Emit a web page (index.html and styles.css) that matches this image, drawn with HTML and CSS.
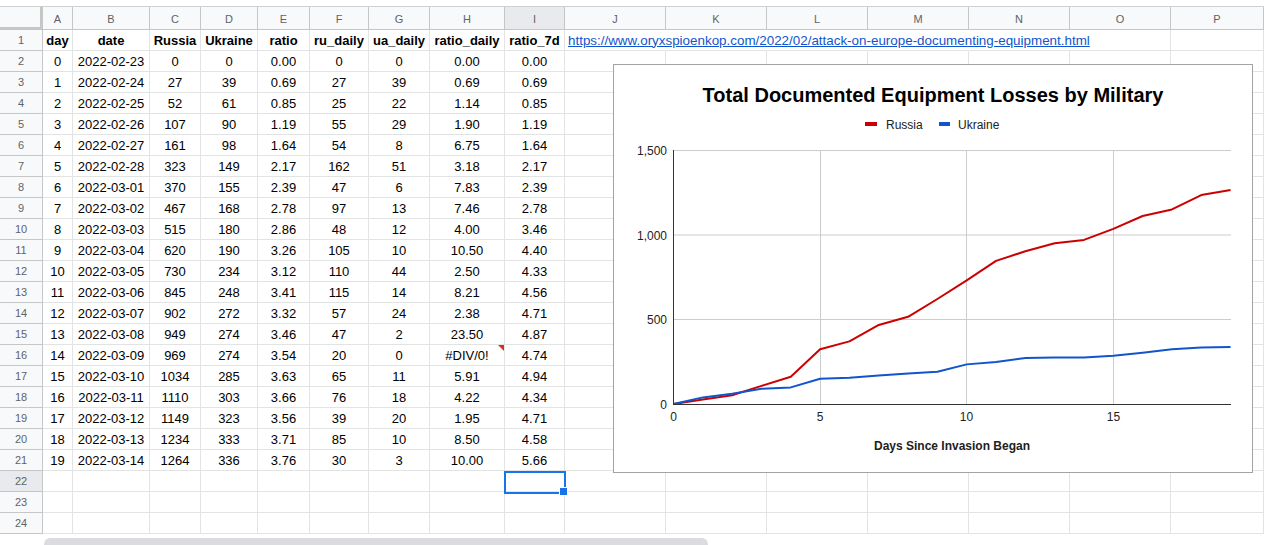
FILE: index.html
```html
<!DOCTYPE html>
<html lang="en">
<head>
    <meta charset="UTF-8">
    <meta name="viewport" content="width=device-width, initial-scale=1.0">
    <title>Equipment Losses</title>
    <link rel="stylesheet" href="styles.css">
</head>
<body>
<div class="sheet">
    <div class="topbar"></div>
    <div class="grid" id="grid"></div>

    <div class="sel"></div>

    <div class="chart">
        <svg class="plot" width="638" height="407">
            <g class="gridl">
                <line x1="59.5" y1="85.5" x2="617" y2="85.5"/>
                <line x1="59.5" y1="170" x2="617" y2="170"/>
                <line x1="59.5" y1="254.5" x2="617" y2="254.5"/>
                <line x1="206.5" y1="85" x2="206.5" y2="339"/>
                <line x1="352.5" y1="85" x2="352.5" y2="339"/>
                <line x1="499.5" y1="85" x2="499.5" y2="339"/>
            </g>
            <polyline id="ru" class="series" stroke="#cc0000"/>
            <polyline id="ua" class="series" stroke="#1155cc"/>
            <g class="axis">
                <line x1="59.5" y1="85" x2="59.5" y2="339.5"/>
                <line x1="59" y1="339.5" x2="617" y2="339.5"/>
            </g>

            <text class="title" x="319" y="36.5">Total Documented Equipment Losses by Military</text>

            <rect x="251" y="57" width="12" height="4" fill="#cc0000"/>
            <text class="lbl" x="272" y="63.5">Russia</text>
            <rect x="325" y="57" width="11" height="4" fill="#1155cc"/>
            <text class="lbl" x="344" y="63.5">Ukraine</text>

            <g class="ylbl">
                <text x="53" y="89.5">1,500</text>
                <text x="53" y="174.5">1,000</text>
                <text x="53" y="259">500</text>
                <text x="53" y="343.5">0</text>
            </g>
            <g class="xlbl">
                <text x="59.5" y="356">0</text>
                <text x="206" y="356">5</text>
                <text x="352.5" y="356">10</text>
                <text x="499.5" y="356">15</text>
            </g>
            <text class="xtitle" x="338" y="384.5">Days Since Invasion Began</text>
        </svg>
    </div>

    <div class="hscroll"><div class="thumb"></div></div>
</div>

<script>
    let letters = 'ABCDEFGHIJKLMNOP'.split('');
    let heads = ['day', 'date', 'Russia', 'Ukraine', 'ratio', 'ru_daily', 'ua_daily', 'ratio_daily', 'ratio_7d'];
    let rows = [
        [0, '2022-02-23', 0, 0, '0.00', 0, 0, '0.00', '0.00'],
        [1, '2022-02-24', 27, 39, '0.69', 27, 39, '0.69', '0.69'],
        [2, '2022-02-25', 52, 61, '0.85', 25, 22, '1.14', '0.85'],
        [3, '2022-02-26', 107, 90, '1.19', 55, 29, '1.90', '1.19'],
        [4, '2022-02-27', 161, 98, '1.64', 54, 8, '6.75', '1.64'],
        [5, '2022-02-28', 323, 149, '2.17', 162, 51, '3.18', '2.17'],
        [6, '2022-03-01', 370, 155, '2.39', 47, 6, '7.83', '2.39'],
        [7, '2022-03-02', 467, 168, '2.78', 97, 13, '7.46', '2.78'],
        [8, '2022-03-03', 515, 180, '2.86', 48, 12, '4.00', '3.46'],
        [9, '2022-03-04', 620, 190, '3.26', 105, 10, '10.50', '4.40'],
        [10, '2022-03-05', 730, 234, '3.12', 110, 44, '2.50', '4.33'],
        [11, '2022-03-06', 845, 248, '3.41', 115, 14, '8.21', '4.56'],
        [12, '2022-03-07', 902, 272, '3.32', 57, 24, '2.38', '4.71'],
        [13, '2022-03-08', 949, 274, '3.46', 47, 2, '23.50', '4.87'],
        [14, '2022-03-09', 969, 274, '3.54', 20, 0, '#DIV/0!', '4.74'],
        [15, '2022-03-10', 1034, 285, '3.63', 65, 11, '5.91', '4.94'],
        [16, '2022-03-11', 1110, 303, '3.66', 76, 18, '4.22', '4.34'],
        [17, '2022-03-12', 1149, 323, '3.56', 39, 20, '1.95', '4.71'],
        [18, '2022-03-13', 1234, 333, '3.71', 85, 10, '8.50', '4.58'],
        [19, '2022-03-14', 1264, 336, '3.76', 30, 3, '10.00', '5.66']
    ];
    let url = 'https://www.oryxspioenkop.com/2022/02/attack-on-europe-documenting-equipment.html';

    let grid = document.querySelector('#grid');

    function cell(cls, text){
        let d = document.createElement('div');
        d.className = cls;
        if(text !== undefined) d.textContent = text;
        grid.append(d);
        return d;
    }

    // column letters
    cell('corner');
    letters.forEach((l)=>{
        cell(l === 'I' ? 'ch active' : 'ch', l);
    });

    for(let r = 1; r <= 24; r++){
        cell(r === 22 ? 'rh active' : 'rh', r);
        for(let c = 0; c < letters.length; c++){
            let cls = 'cell';
            let txt = '';
            if(r === 1){
                if(c < heads.length){ cls += ' bold'; txt = heads[c]; }
                if(c === 9){ cls += ' link'; txt = url; }
                if(c >= 9 && c <= 13) cls += ' nogap';
            } else if(r <= 21 && c < heads.length){
                txt = rows[r - 2][c];
                if(txt === '#DIV/0!') cls += ' err';
            }
            cell(cls, txt);
        }
    }

    // chart lines
    let xOf = (d)=> 59.5 + 29.32 * d;
    let yOf = (v)=> 339 - v * 254 / 1500;
    let ru = rows.map((row)=> xOf(row[0]) + ',' + yOf(row[2])).join(' ');
    let ua = rows.map((row)=> xOf(row[0]) + ',' + yOf(row[3])).join(' ');
    document.querySelector('#ru').setAttribute('points', ru);
    document.querySelector('#ua').setAttribute('points', ua);
</script>
</body>
</html>
```

FILE: styles.css
```css
*{
    margin: 0;
    padding: 0;
    box-sizing: border-box;
}
body{
    background-color: #fff;
    font-family: "Liberation Sans", Arial, sans-serif;
    overflow: hidden;
}
.sheet{
    position: relative;
    width: 1264px;
    height: 545px;
}
.topbar{
    height: 7px;
    border-bottom: 1px solid #d0d0d0;
}
.grid{
    display: grid;
    grid-template-columns: 43px 30px 77px 51px 57px 52px 59px 61px 75px 60px 101px 101px 101px 101px 101px 101px 93px;
    grid-template-rows: 23px repeat(24, 21px);
}
.cell{
    position: relative;
    display: flex;
    align-items: center;
    justify-content: center;
    white-space: nowrap;
    font-size: 13px;
    color: #000;
    border-right: 1px solid #e2e3e3;
    border-bottom: 1px solid #e2e3e3;
}
.bold{
    font-weight: bold;
}
.link{
    justify-content: flex-start;
    padding-left: 3px;
    font-size: 13.4px;
    color: #1155cc;
    text-decoration: underline;
    overflow: visible;
    z-index: 1;
}
.nogap{
    border-right-color: transparent;
}
.err::after{
    content: '';
    position: absolute;
    top: 0;
    right: 0;
    border-top: 6px solid #d93025;
    border-left: 6px solid transparent;
}
.ch, .rh, .corner{
    display: flex;
    align-items: center;
    justify-content: center;
    background-color: #f8f9fa;
    color: #5f6368;
    font-size: 11px;
    border-right: 1px solid #c4c7c5;
    border-bottom: 1px solid #c4c7c5;
}
.ch{
    padding-top: 1px;
}
.corner{
    border-right: 3px solid #c4c7c5;
    border-bottom: 3px solid #c4c7c5;
}
.active{
    background-color: #e8eaed;
}
.sel{
    position: absolute;
    left: 504px;
    top: 471px;
    width: 62px;
    height: 23px;
    border: 2px solid #1a73e8;
}
.sel::after{
    content: '';
    position: absolute;
    right: -4px;
    bottom: -4px;
    width: 7px;
    height: 7px;
    background-color: #1a73e8;
    border: 1px solid #fff;
}
.chart{
    position: absolute;
    left: 613px;
    top: 64px;
    width: 640px;
    height: 409px;
    border: 1px solid #a3a3a3;
    background-color: #fff;
}
.plot{
    display: block;
    font-family: "Liberation Sans", Arial, sans-serif;
}
.gridl line{
    stroke: #cccccc;
    stroke-width: 1;
}
.axis line{
    stroke: #333;
    stroke-width: 1;
}
.series{
    fill: none;
    stroke-width: 2;
    stroke-linejoin: round;
}
.title{
    font-size: 20px;
    font-weight: bold;
    text-anchor: middle;
    fill: #000;
}
.lbl{
    font-size: 12px;
    fill: #222;
}
.ylbl text{
    font-size: 12px;
    fill: #222;
    text-anchor: end;
}
.xlbl text{
    font-size: 12px;
    fill: #222;
    text-anchor: middle;
}
.xtitle{
    font-size: 12px;
    font-weight: bold;
    fill: #222;
    text-anchor: middle;
}
.hscroll{
    height: 10px;
    padding: 4px 0 0 44px;
}
.thumb{
    width: 664px;
    height: 12px;
    border-radius: 6px;
    background-color: #dadce0;
}
```
